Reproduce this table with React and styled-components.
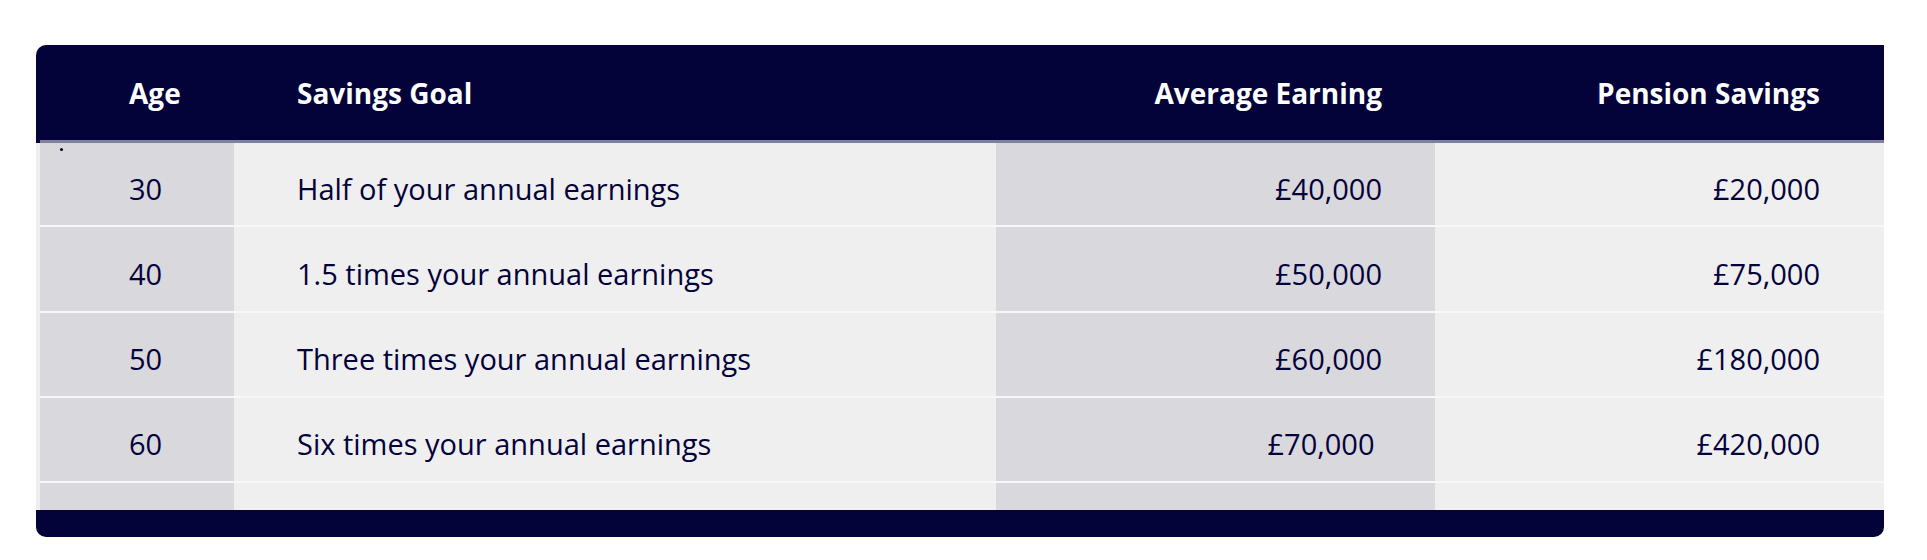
import React from "react";
import styled, { createGlobalStyle } from "styled-components";

const GlobalStyle = createGlobalStyle`
  body {
    margin: 0;
    background: #ffffff;
    font-family: "Open Sans", "Noto Sans", sans-serif;
  }
`;

const NAVY = "#03033a";

const Page = styled.div`
  padding: 45px 43px 23px 36px;
`;

const Card = styled.div`
  border-radius: 10px 0 10px 10px;
  overflow: hidden;
  background: #efefef;
`;

const Head = styled.div`
  background: ${NAVY};
  padding-left: 4px;
`;

const columns = "194px 762px 439px 1fr";

const HeadGrid = styled.div`
  display: grid;
  grid-template-columns: ${columns};
  height: 95px;
  border-bottom: 3px solid #7f7f9e;
`;

const HeadCell = styled.div`
  display: flex;
  align-items: center;
  justify-content: ${({ align }) => (align === "right" ? "flex-end" : "flex-start")};
  padding: ${({ pad }) => pad};
  color: #ffffff;
  font-weight: 700;
  font-size: 28px;
`;

const Body = styled.div`
  padding-left: 4px;
  position: relative;
`;

const Row = styled.div`
  display: grid;
  grid-template-columns: ${columns};
  height: ${({ h }) => h}px;
  border-bottom: ${({ last }) => (last ? "none" : "2px solid #f7f7f8")};
`;

const Cell = styled.div`
  display: flex;
  align-items: center;
  justify-content: ${({ align }) => (align === "right" ? "flex-end" : "flex-start")};
  padding: ${({ pad }) => pad};
  padding-top: ${({ empty }) => (empty ? 0 : 8)}px;
  background: ${({ shade }) => (shade ? "#d9d8dd" : "#efefef")};
  color: ${NAVY};
  font-size: 29px;
`;

const Dot = styled.span`
  position: absolute;
  left: 24px;
  top: 5px;
  width: 3px;
  height: 3px;
  border-radius: 50%;
  background: ${NAVY};
`;

const Footer = styled.div`
  height: 27px;
  background: ${NAVY};
`;

const cols = [
  { label: "Age", align: "left", pad: "0 0 0 89px", shade: true },
  { label: "Savings Goal", align: "left", pad: "0 0 0 63px", shade: false },
  { label: "Average Earning", align: "right", pad: "0 53px 0 0", shade: true },
  { label: "Pension Savings", align: "right", pad: "0 64px 0 0", shade: false },
];

const rows = [
  { h: 82, cells: ["30", "Half of your annual earnings", "£40,000", "£20,000"] },
  { h: 84, cells: ["40", "1.5 times your annual earnings", "£50,000", "£75,000"] },
  { h: 83, cells: ["50", "Three times your annual earnings", "£60,000", "£180,000"] },
  // the source had a stray trailing space after £70,000
  { h: 83, cells: ["60", "Six times your annual earnings", "£70,000\u00a0", "£420,000"] },
];

const App = () => {
  return (
    <>
      <GlobalStyle />
      <Page>
        <Card>
          <Head>
            <HeadGrid>
              {cols.map((c) => (
                <HeadCell key={c.label} align={c.align} pad={c.pad}>
                  {c.label}
                </HeadCell>
              ))}
            </HeadGrid>
          </Head>
          <Body>
            <Dot />
            {rows.map((r, i) => (
              <Row key={i} h={r.h}>
                {r.cells.map((text, j) => (
                  <Cell key={j} align={cols[j].align} pad={cols[j].pad} shade={cols[j].shade}>
                    {text}
                  </Cell>
                ))}
              </Row>
            ))}
            {/* empty spacer row before the footer */}
            <Row h={27} last>
              {cols.map((c, j) => (
                <Cell key={j} empty shade={c.shade} />
              ))}
            </Row>
          </Body>
          <Footer />
        </Card>
      </Page>
    </>
  );
};

export default App;
